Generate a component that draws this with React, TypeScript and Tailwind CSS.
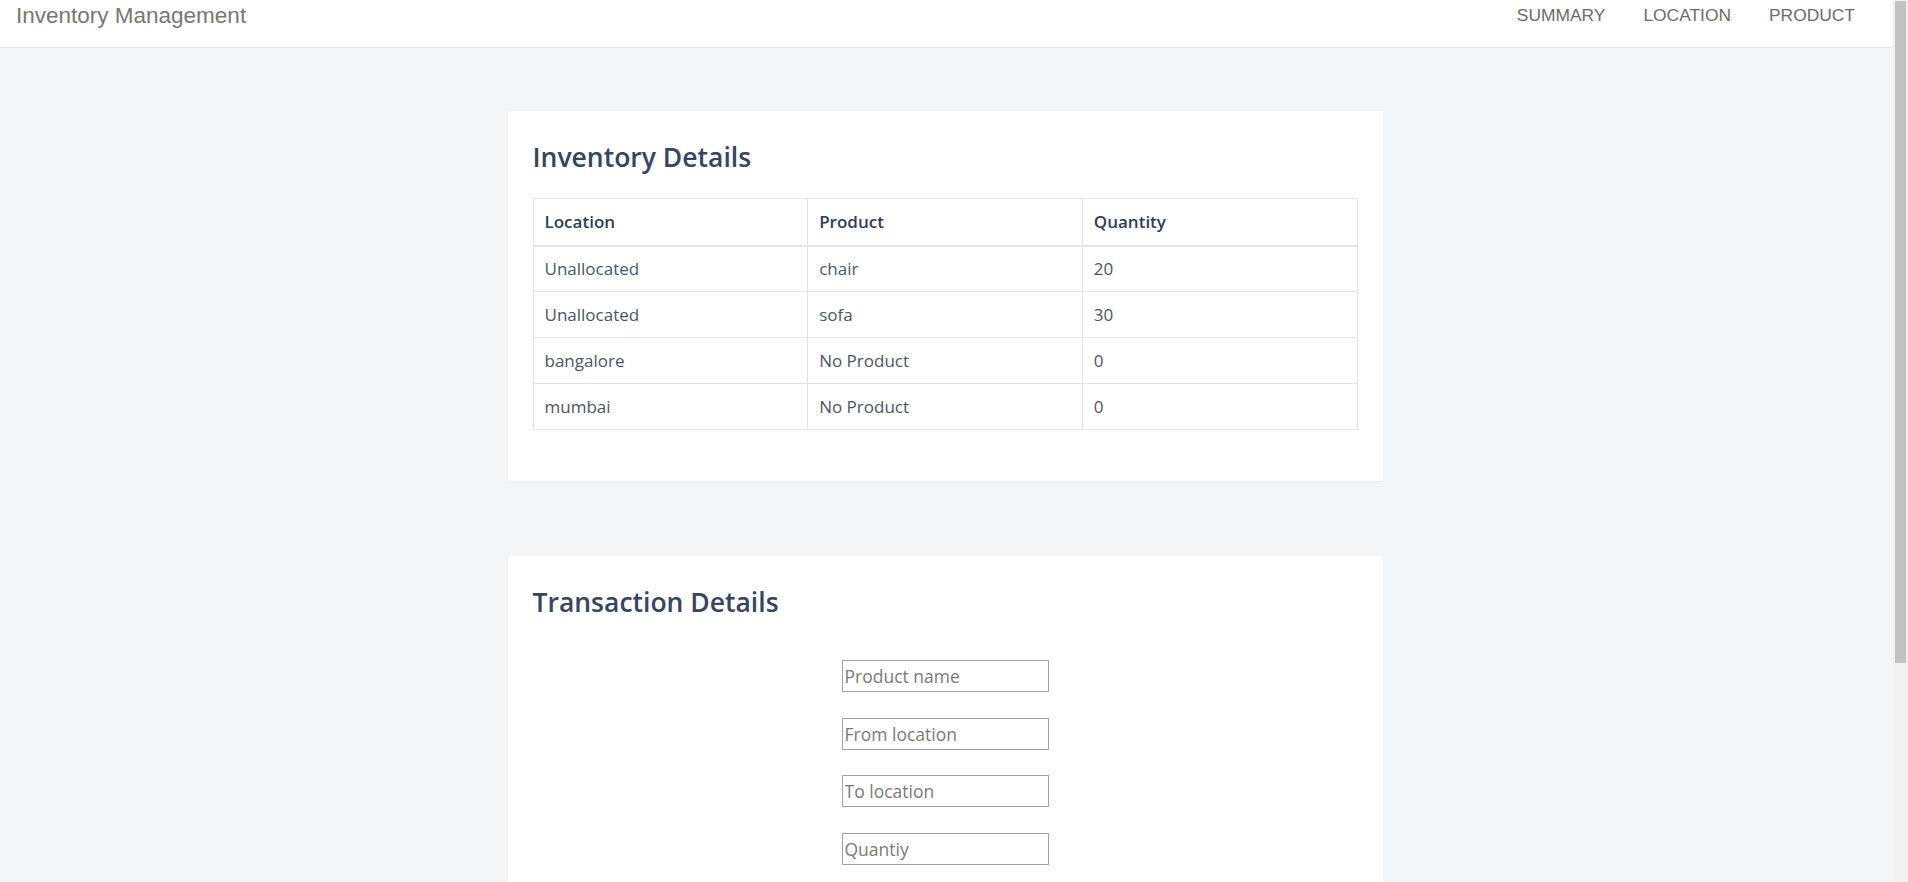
import React from 'react'

const rows = [
  { location: 'Unallocated', product: 'chair', quantity: 20 },
  { location: 'Unallocated', product: 'sofa', quantity: 30 },
  { location: 'bangalore', product: 'No Product', quantity: 0 },
  { location: 'mumbai', product: 'No Product', quantity: 0 },
]

const Header = () => (
  <header className="h-[48px] bg-white border-b border-[#e3e6ea] rounded-br-[4px] flex items-start justify-between pl-4 pr-[38px]" style={{ fontFamily: '"Liberation Sans", Arial, sans-serif' }}>
    <span className="text-[22.5px] leading-[31px] text-[#777777]">Inventory Management</span>
    <nav className="flex gap-[38px] text-[17.4px] leading-[31px] text-[#6b6b6b]">
      <a href="#">SUMMARY</a>
      <a href="#">LOCATION</a>
      <a href="#">PRODUCT</a>
    </nav>
  </header>
)

const InventoryTable = () => (
  <table className="w-full table-fixed border-collapse border border-[#e2e4e7] text-[17px] text-[#4a5568]">
    <thead>
      <tr className="h-[47px] border-b-2 border-[#e2e4e7]">
        <th className="border-x border-[#e2e4e7] px-[11px] text-left font-semibold text-[#2f3d58]">Location</th>
        <th className="border-x border-[#e2e4e7] px-[11px] text-left font-semibold text-[#2f3d58]">Product</th>
        <th className="border-x border-[#e2e4e7] px-[11px] text-left font-semibold text-[#2f3d58]">Quantity</th>
      </tr>
    </thead>
    <tbody>
      {rows.map((r, i) => (
        <tr key={i} className="border-t border-[#e2e4e7]">
          <td className="border border-[#e2e4e7] px-[11px] h-[46px]">{r.location}</td>
          <td className="border border-[#e2e4e7] px-[11px] h-[46px]">{r.product}</td>
          <td className="border border-[#e2e4e7] px-[11px] h-[46px]">{r.quantity}</td>
        </tr>
      ))}
    </tbody>
  </table>
)

const inputs = ['Product name', 'From location', 'To location', 'Quantiy']

export default function App() {
  return (
    <div className="h-screen flex bg-[#f3f6f9]" style={{ fontFamily: '"Open Sans", sans-serif' }}>
      <div className="flex-1 min-w-0 overflow-hidden">
        <Header />
        <main className="flex flex-col items-center pt-[63px] pb-20 pr-[3px] gap-[75px]">
          {/* Inventory card */}
          <section className="w-[875px] bg-white shadow-[0_1px_2px_rgba(0,0,0,0.06)] px-[25px] pt-[21px] pb-[51px]">
            <h2 className="text-[26.5px] leading-[50px] font-semibold text-[#364563] mb-[16px]">Inventory Details</h2>
            <InventoryTable />
          </section>

          {/* Transaction card */}
          <section className="w-[875px] bg-white shadow-[0_1px_2px_rgba(0,0,0,0.06)] px-[25px] pt-[21px] pb-[40px]">
            <h2 className="text-[26.5px] leading-[50px] font-semibold text-[#364563]">Transaction Details</h2>
            <form className="flex flex-col items-center gap-[25.5px] mt-[33px]">
              {inputs.map((p) => (
                <input
                  key={p}
                  type="text"
                  placeholder={p}
                  className="w-[207px] h-[32px] border border-[#a3a3a3] px-[2px] text-[17.5px] text-[#333] placeholder-[#7a7a7a] bg-white outline-none"
                />
              ))}
            </form>
          </section>
        </main>
      </div>

      {/* scrollbar */}
      <div className="w-[15px] bg-[#f1f1f1] flex flex-col px-[2px] pt-[1px]">
        <div className="h-[662px] bg-[#c1c1c1]" />
      </div>
    </div>
  )
}
